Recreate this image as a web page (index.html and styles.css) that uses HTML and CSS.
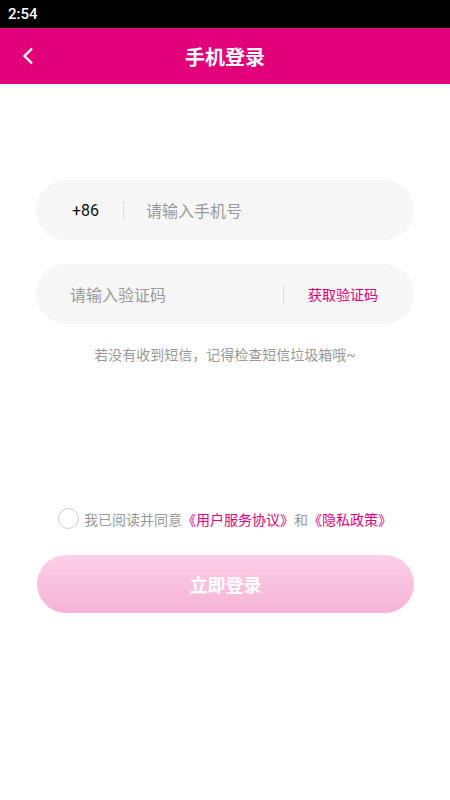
FILE: index.html
```html
<!DOCTYPE html>
<html>
<head>
  <meta charset="utf-8">
  <title>手机登录</title>
  <link rel="stylesheet" href="styles.css">
</head>
<body>
  <div class="status-bar">2:54</div>
  <div class="header">
    <span class="back">
      <svg width="12" height="18" viewBox="0 0 12 18"><path d="M10 1.5 L2.5 9 L10 16.5" fill="none" stroke="#fff" stroke-width="2.4"/></svg>
    </span>
    <span class="title">手机登录</span>
  </div>
  <div class="form">
    <div class="field">
      <span class="code">+86</span>
      <span class="sep"></span>
      <span class="placeholder">请输入手机号</span>
    </div>
    <div class="field field-sms">
      <span class="placeholder grow">请输入验证码</span>
      <span class="sep"></span>
      <span class="get-code">获取验证码</span>
    </div>
    <p class="hint">若没有收到短信，记得检查短信垃圾箱哦~</p>
  </div>
  <div class="agree">
    <span class="check"></span>
    <span>我已阅读并同意<a>《用户服务协议》</a>和<a>《隐私政策》</a></span>
  </div>
  <div class="submit">立即登录</div>
</body>
</html>
```

FILE: styles.css
```css
body {
  margin: 0;
  font-family: Roboto, "Noto Sans CJK SC", sans-serif;
  background: #fff;
  width: 450px;
  height: 800px;
  overflow: hidden;
}
.status-bar {
  height: 28px;
  background: #000;
  color: #fff;
  font-size: 15px;
  font-weight: 500;
  line-height: 28px;
  padding-left: 8px;
}
.header {
  --brand: #e3007b;

  height: 56px;
  background: var(--brand);
  display: flex;
  align-items: center;
  justify-content: center;
  position: relative;
}
.header .back {
  position: absolute;
  left: 22px;
  top: 19px;
  display: flex;
}
.header .title {
  color: #fff;
  font-size: 20px;
  font-weight: 700;
}
.form {
  padding: 96px 36px 0;
  display: flex;
  flex-direction: column;
  gap: 24px;
}
.field {
  height: 60px;
  border-radius: 30px;
  background: #f7f7f7;
  display: flex;
  align-items: center;
  padding: 0 36px;
  font-size: 16px;
}
.field-sms {
  padding-left: 34px;
}
.code {
  color: #111;
  width: 51px;
}
.sep {
  width: 1px;
  height: 19px;
  background: #ddd;
  margin-right: 22px;
}
.field-sms .sep {
  margin-right: 24px;
}
.placeholder {
  color: #9a9a9a;
}
.grow {
  flex: 1;
}
.get-code {
  color: #e3007b;
  font-size: 14px;
}
.hint {
  margin: -3px 0 0;
  text-align: center;
  color: #999;
  font-size: 14px;
  line-height: 20px;
}
.agree {
  margin-top: 143px;
  padding-left: 58px;
  display: flex;
  align-items: center;
  gap: 5px;
  font-size: 14px;
  color: #999;
}
.agree a {
  color: #e3007b;
}
.check {
  width: 19px;
  height: 19px;
  border: 1.5px solid #ccc;
  border-radius: 50%;
}
.submit {
  margin: 26px 36px 0 37px;
  height: 58px;
  border-radius: 29px;
  background: linear-gradient(#fccfe7, #f6b3d7);
  color: #fff;
  font-size: 18px;
  font-weight: 700;
  display: flex;
  align-items: center;
  justify-content: center;
}
```
